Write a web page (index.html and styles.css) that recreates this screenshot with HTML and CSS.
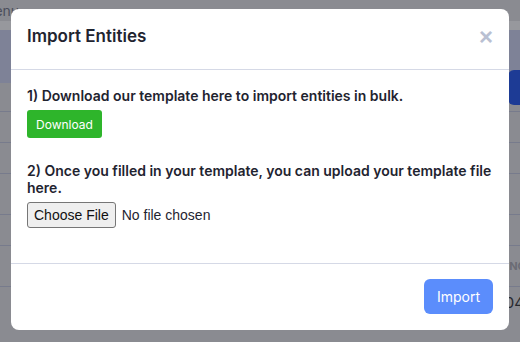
FILE: index.html
```html
<!DOCTYPE html>
<html lang="en">
<head>
  <meta charset="UTF-8">
  <meta name="viewport" content="width=device-width, initial-scale=1.0">
  <title>Import Entities</title>
  <link rel="stylesheet" href="styles.css">
</head>
<body>
  <!-- page behind the dialog -->
  <div class="page">
    <div class="topbar"><span class="crumb">Entities menu</span></div>
    <div class="toolbar"></div>
    <div class="panel"><span class="panel-btn"></span></div>
    <div class="table">
      <div class="row"></div>
      <div class="row"></div>
      <div class="row tall"></div>
      <div class="row"></div>
      <div class="row tall"><span class="cell-head">NO</span></div>
      <div class="row"><span class="cell">04</span></div>
    </div>
  </div>

  <div class="backdrop">
    <div class="modal">
      <div class="modal-header">
        <h3>Import Entities</h3>
        <button class="close-btn">&times;</button>
      </div>
      <div class="modal-body">
        <p>1) Download our template here to import entities in bulk.</p>
        <button class="btn btn-download">Download</button>
        <p class="step-two">2) Once you filled in your template, you can upload your template file here.</p>
        <input type="file" id="templateFile">
      </div>
      <div class="modal-footer">
        <button class="btn btn-import">Import</button>
      </div>
    </div>
  </div>
</body>
</html>
```

FILE: styles.css
```css
body {
  margin:0; padding:0;
  font-family: Inter, "Noto Sans", sans-serif;
  background:#8a8b91;
  overflow:hidden;
}
.page { height:342px; }
.topbar { height:21px; overflow:hidden; }
.crumb {
  display:block; margin-left:-70px;
  font-size:14px; line-height:21px; color:#4b4e5c;
}
.toolbar { height:9px; background:#97989d; }
.panel {
  height:53px; background:#7e8297;
  display:flex; justify-content:flex-end; align-items:flex-start;
}
.panel-btn {
  width:20px; height:35px; margin-top:40px; margin-right:-8px;
  background:#1d3b95; border-radius:6px;
}
.table { padding-top:28px; }
.row {
  height:30px; border-top:1px solid #777b8c;
  display:flex; justify-content:flex-end; align-items:center;
}
.row.tall { height:40px; }
.cell-head { font-size:11px; font-weight:bold; color:#6a6c74; margin-right:-6px; }
.cell { font-size:15px; color:#26282e; margin-right:-4px; }

.backdrop {
  position:fixed; top:0; left:0; right:0; bottom:0;
  padding:9px 11px;
}
.modal {
  width:498px; height:321px;
  background:#fff; border-radius:8px;
  display:flex; flex-direction:column;
  color:#1f2430;
}
.modal-header {
  height:61px; padding:17px 16px 0;
  border-bottom:1px solid #d5d9e6;
  display:flex; justify-content:space-between; align-items:flex-start;
  box-sizing:border-box;
}
.modal-header h3 {
  margin:0; font-size:17px; font-weight:600; line-height:21px;
}
.close-btn {
  border:none; background:none; padding:0;
  font-size:24px; font-weight:bold; line-height:21px;
  color:#b9c0d2; cursor:pointer;
}
.modal-body {
  flex:1; padding:17px 16px 0;
}
.modal-body p {
  margin:0 0 6px; font-size:14px; font-weight:600; line-height:17px;
}
.modal-body .step-two { margin-top:24px; }
.btn {
  border:none; color:#fff; cursor:pointer;
  font-family:inherit;
}
.btn-download {
  background:#2eb52b; border-radius:3px;
  height:28px; padding:0 9px; font-size:12px;
}
input[type="file"] {
  font-family: "Liberation Sans", Arial, sans-serif;
  font-size:14px; color:#1f2430;
}
input[type="file"]::file-selector-button {
  font-family:inherit; font-size:14px;
  height:26px; padding:0 6px; margin-right:6px;
  background:#efefef; border:1px solid #767676; border-radius:3px;
  color:#111;
}
.modal-footer {
  height:67px; padding:0 16px;
  border-top:1px solid #d5d9e6;
  display:flex; justify-content:flex-end; align-items:center;
  box-sizing:border-box;
}
.btn-import {
  background:#5b8dfc; border-radius:6px;
  height:35px; padding:0 13px; font-size:14px;
  margin-top:-2px;
}
```
